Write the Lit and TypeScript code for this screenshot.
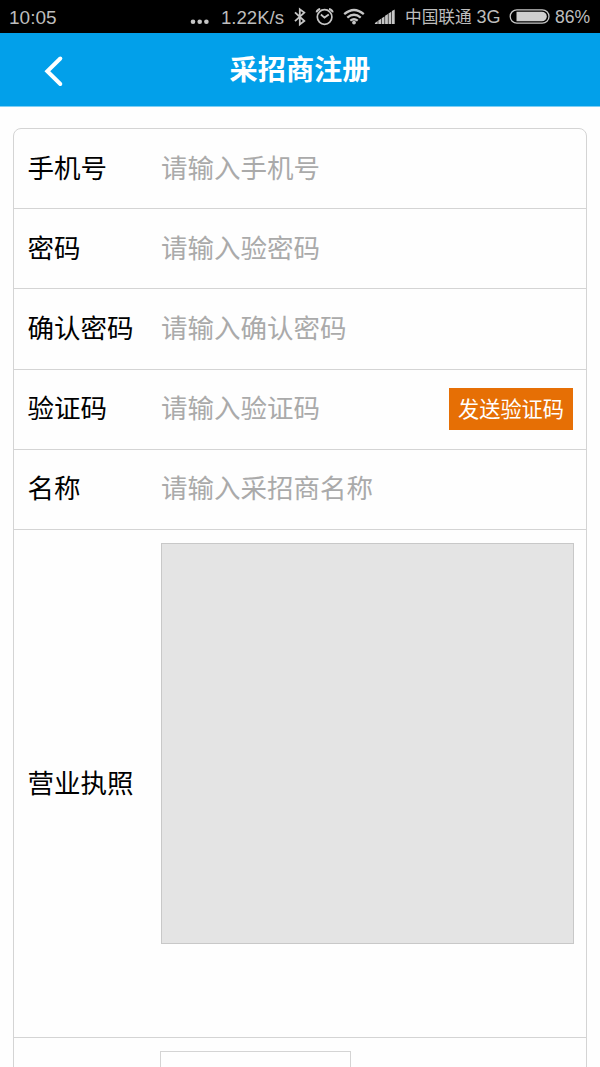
import { LitElement, html, css, svg } from "lit";
import { customElement, property } from "lit/decorators.js";

@customElement("status-bar")
class StatusBar extends LitElement {
  static styles = css`
    :host {
      display: flex;
      align-items: center;
      box-sizing: border-box;
      height: 33px;
      padding: 2px 0 0 9px;
      background: #000;
      color: #bdbdbd;
      font: 19px/31px "Liberation Sans", "Noto Sans CJK SC", sans-serif;
      white-space: nowrap;
    }
    .time { width: 181px; }
    .dots { width: 31px; }
    .speed { width: 72px; font-size: 18.6px; }
    .carrier { width: 104px; font-size: 16.7px; }
    .net { font-size: 18px; }
    .icons { width: 112px; }
    .battery { width: 46px; }
    .level { font-size: 17.6px; }
    svg { display: block; }
  `;
  render() {
    return html`
      <span class="time">10:05</span>
      <svg class="dots" width="31" height="31" viewBox="190 2 31 31" fill="#c6c6c6">
        <circle cx="193" cy="21.7" r="2.3" /><circle cx="199.7" cy="21.7" r="2.3" /><circle cx="206.4" cy="21.7" r="2.3" />
      </svg>
      <span class="speed">1.22K/s</span>
      <svg class="icons" width="112" height="31" viewBox="293 2 112 31" fill="none" stroke="#c6c6c6">
        <path stroke-width="1.8" d="M295 12.4L304.3 21L299.8 24.4V9.2L304.3 12.6L295 21.2" />
        <circle cx="324.6" cy="17" r="7.3" stroke-width="1.7" />
        <path stroke-width="1.8" d="M320.9 14.5L324.5 17.6L328.8 14.6M316.5 12.4Q317 9.6 320.2 9M329 9Q332.2 9.6 332.8 12.4" />
        <path stroke-width="2.3" d="M344.2 14.2Q354 5.8 363.8 14.2M347.3 17.6Q354 12 360.7 17.6M350.3 20.6Q354 17.8 357.7 20.6" />
        <circle cx="354" cy="22.6" r="1.9" fill="#c6c6c6" stroke="none" />
        ${[0, 1, 2, 3, 4, 5].map(
          (i) => svg`<path fill="#c6c6c6" stroke="none" d="M${374.9 + i * 3.4} 24V${23 - i * 2.4}L${377.7 + i * 3.4} ${21 - i * 2.3}V24Z" />`
        )}
      </svg>
      <span class="carrier">中国联通 <span class="net">3G</span></span>
      <svg class="battery" width="46" height="31" viewBox="509 2 46 31">
        <rect x="510.2" y="9.8" width="38.8" height="13.4" rx="6.7" fill="none" stroke="#c6c6c6" stroke-width="1.3" />
        <path d="M516.5 11.7H541.8A5 4.8 0 0 1 541.8 21.3H516.5Z" fill="#cecece" />
      </svg>
      <span class="level">86%</span>
    `;
  }
}

@customElement("title-bar")
class TitleBar extends LitElement {
  static styles = css`
    :host {
      display: grid;
      grid-template-columns: 70px 1fr 70px;
      height: 74px;
      background: #02a0ea;
      border-bottom: 1px solid #7fcff4;
      box-sizing: border-box;
      color: #fff;
    }
    .title {
      margin: 0;
      text-align: center;
      font: bold 28.2px/69px "Noto Sans CJK SC", sans-serif;
    }
    svg { display: block; }
  `;
  @property() heading = "";
  render() {
    return html`
      <svg width="70" height="72" viewBox="0 33 70 72" fill="none" stroke="#fff" stroke-width="4" stroke-linecap="round">
        <path d="M60.3 58.5L47.3 71.2L60.3 84" />
      </svg>
      <h1 class="title">${this.heading}</h1>
    `;
  }
}

interface Field {
  label: string;
  hint: string;
  action?: string;
}

const FIELDS: Field[] = [
  { label: "手机号", hint: "请输入手机号" },
  { label: "密码", hint: "请输入验密码" },
  { label: "确认密码", hint: "请输入确认密码" },
  { label: "验证码", hint: "请输入验证码", action: "发送验证码" },
  { label: "名称", hint: "请输入采招商名称" },
];

@customElement("app-root")
class AppRoot extends LitElement {
  static styles = css`
    :host {
      display: flex;
      flex-direction: column;
      height: 1067px;
      overflow: hidden;
      background: #fefefe;
      font: 26.5px/40px "Noto Sans CJK SC", sans-serif;
      color: #000;
    }
    status-bar, title-bar { flex: none; }
    .card {
      flex: none;
      margin: 21px 13px 0;
      border: 1px solid #d4d4d4;
      border-radius: 8px 8px 0 0;
    }
    .row {
      display: grid;
      grid-template-columns: 133px 1fr auto;
      align-items: center;
      box-sizing: border-box;
      height: 80px;
      padding: 0 13px 0 14px;
      border-bottom: 1px solid #d4d4d4;
      white-space: nowrap;
    }
    .row:nth-child(3) { height: 81px; }
    .label, .hint { padding-bottom: 3px; }
    .row:nth-child(n + 3):not(.license) > .label,
    .row:nth-child(n + 3) > .hint { padding-bottom: 5px; }
    .label { margin-left: -0.5px; }
    .hint { color: #aaa; }
    .send {
      width: 124px;
      height: 42px;
      margin-bottom: 2px;
      padding: 0 0 3px;
      border: 0;
      background: #e66f05;
      color: #fff;
      font: 21.2px/39px "Noto Sans CJK SC", sans-serif;
    }
    .license { height: 508px; padding-right: 12px; }
    .preview {
      align-self: start;
      box-sizing: border-box;
      height: 401px;
      margin: 13px 0 0;
      border: 1px solid #c8c8c8;
      background: #e4e4e4;
    }
    .next { height: 90px; }
    .picker {
      align-self: start;
      box-sizing: border-box;
      width: 191px;
      height: 60px;
      margin: 13px 0 0 -1px;
      border: 1px solid #d4d4d4;
    }
  `;
  render() {
    return html`
      <status-bar></status-bar>
      <title-bar heading="采招商注册"></title-bar>
      <div class="card">
        ${FIELDS.map(
          (f) => html`<div class="row">
            <span class="label">${f.label}</span>
            <span class="hint">${f.hint}</span>
            ${f.action ? html`<button class="send">${f.action}</button>` : null}
          </div>`
        )}
        <div class="row license">
          <span class="label">营业执照</span>
          <div class="preview"></div>
        </div>
        <div class="row next">
          <span></span>
          <div class="picker"></div>
        </div>
      </div>
    `;
  }
}
